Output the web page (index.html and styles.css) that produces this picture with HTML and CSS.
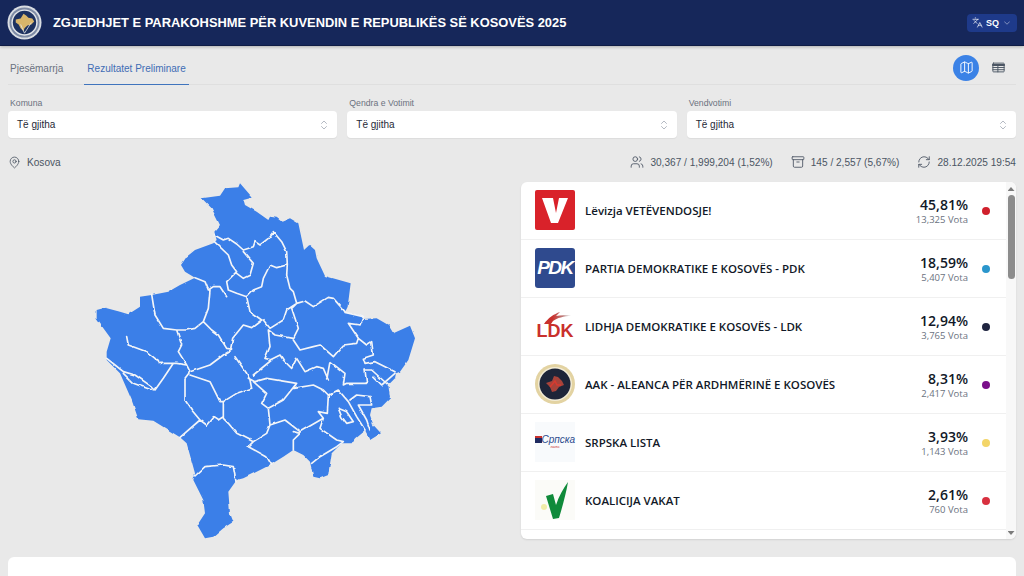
FILE: index.html
```html
<!DOCTYPE html>
<html lang="sq">
<head>
<meta charset="utf-8">
<title>Zgjedhjet</title>
<link rel="stylesheet" href="styles.css">
</head>
<body>
<header class="topbar">
  <div class="brand">
    <svg class="emblem" viewBox="0 0 36 36"><circle cx="18" cy="18" r="17.500" fill="#d9dde3"/><circle cx="18" cy="18" r="15.500" fill="#7d8aa5"/><circle cx="18" cy="18" r="13.500" fill="#e4e6ea"/><circle cx="18" cy="18" r="12" fill="#1d3160"/><path d="M9 15l5-1 3-5 3 2 2 2 4 1 2 3-3 3-4 1-3 3-1 3-3-3-2-4-3-2z" fill="#d9b56a"/><path d="M18 29l-4-9M18 29l7-11" stroke="#e4e6ea" stroke-width=".8" fill="none"/></svg>
    <h1 class="title">ZGJEDHJET E PARAKOHSHME PËR KUVENDIN E REPUBLIKËS SË KOSOVËS 2025</h1>
  </div>
  <button class="lang">
    <svg class="ic ic-11" viewBox="0 0 24 24"><path d="M5 8l6 6M4 14l6-6 2-3M2 5h12M7 2h1M22 22l-5-10-5 10M14 18h6"/></svg>
    <span>SQ</span>
    <svg class="ic ic-10 dim" viewBox="0 0 24 24"><path d="M6 9l6 6 6-6"/></svg>
  </button>
</header>
<main class="page">
  <nav class="tabs">
    <div class="tablist">
      <a class="tab">Pjesëmarrja</a>
      <a class="tab active">Rezultatet Preliminare</a>
    </div>
    <div class="views">
      <span class="view on"><svg class="ic ic-15" viewBox="0 0 24 24"><path d="M14.106 5.553a2 2 0 0 0 1.788 0l3.659-1.830A1 1 0 0 1 21 4.619v12.764a1 1 0 0 1-.553.894l-4.553 2.277a2 2 0 0 1-1.788 0l-4.212-2.106a2 2 0 0 0-1.788 0l-3.659 1.830A1 1 0 0 1 3 19.381V6.618a1 1 0 0 1 .553-.894l4.553-2.277a2 2 0 0 1 1.788 0zM15 5.764v15M9 3.236v15"/></svg></span>
      <span class="view"><svg class="ic ic-15" viewBox="0 0 24 24"><rect x="3" y="5" width="18" height="14" rx="1"/><path d="M3 8h18" stroke-width="3"/><path d="M3 12h18M3 15.500h18M11 10v9"/></svg></span>
    </div>
  </nav>
  <section class="filters">
    <div class="field"><label class="flabel">Komuna</label><div class="select"><span>Të gjitha</span><svg class="ic ic-12 light" viewBox="0 0 24 24"><path d="M7 15l5 5 5-5M7 9l5-5 5 5"/></svg></div></div>
    <div class="field"><label class="flabel">Qendra e Votimit</label><div class="select"><span>Të gjitha</span><svg class="ic ic-12 light" viewBox="0 0 24 24"><path d="M7 15l5 5 5-5M7 9l5-5 5 5"/></svg></div></div>
    <div class="field"><label class="flabel">Vendvotimi</label><div class="select"><span>Të gjitha</span><svg class="ic ic-12 light" viewBox="0 0 24 24"><path d="M7 15l5 5 5-5M7 9l5-5 5 5"/></svg></div></div>
  </section>
  <section class="status">
    <div class="stat"><svg class="ic ic-13" viewBox="0 0 24 24"><path d="M20 10c0 6-8 12-8 12s-8-6-8-12a8 8 0 0 1 16 0Z"/><circle cx="12" cy="10" r="3"/></svg><span class="place">Kosova</span></div>
    <div class="stats">
      <div class="stat"><svg class="ic ic-14" viewBox="0 0 24 24"><path d="M16 21v-2a4 4 0 0 0-4-4H6a4 4 0 0 0-4 4v2"/><circle cx="9" cy="7" r="4"/><path d="M22 21v-2a4 4 0 0 0-3-3.870M16 3.130a4 4 0 0 1 0 7.750"/></svg><span>30,367 / 1,999,204 (1,52%)</span></div>
      <div class="stat"><svg class="ic ic-14" viewBox="0 0 24 24"><rect x="2" y="3" width="20" height="5" rx="1"/><path d="M4 8v11a2 2 0 0 0 2 2h12a2 2 0 0 0 2-2V8M10 12h4"/></svg><span>145 / 2,557 (5,67%)</span></div>
      <div class="stat"><svg class="ic ic-14" viewBox="0 0 24 24"><path d="M3 12a9 9 0 0 1 9-9 9.750 9.750 0 0 1 6.740 2.740L21 8M21 3v5h-5M21 12a9 9 0 0 1-9 9 9.750 9.750 0 0 1-6.740-2.740L3 16M8 16H3v5"/></svg><span>28.12.2025 19:54</span></div>
    </div>
  </section>
  <section class="content">
    <div class="mapcol">
      <svg class="map" viewBox="0 21 1050 1089">
        <defs>
          <filter id="rough" x="-5%" y="-5%" width="110%" height="110%" primitiveUnits="userSpaceOnUse">
            <feTurbulence type="fractalNoise" baseFrequency="0.035" numOctaves="2" seed="4"/>
            <feDisplacementMap in="SourceGraphic" scale="8" xChannelSelector="R" yChannelSelector="G"/>
          </filter>
        </defs>
        <g class="rough">
        <path class="land" d="M365,70 420,62 435,40 475,37 480,25 515,65 490,72 495,90 530,110 565,135 570,125 590,128 605,140 630,130 655,145 672,225 688,210 705,225 710,250 735,303 812,325 803,395 795,412 845,422 850,432 890,430 925,450 940,475 990,452 1005,490 985,555 960,590 948,595 945,610 925,630 930,670 905,695 875,700 870,720 880,750 903,775 870,795 855,765 825,790 815,805 785,805 755,835 745,900 720,910 700,905 690,860 670,840 640,825 610,845 570,870 530,890 490,910 470,915 445,950 450,1015 460,1040 430,1060 400,1085 375,1090 352,1050 375,1015 370,975 340,915 345,895 320,805 300,787 220,737 175,733 155,675 120,595 80,555 80,530 92,490 50,432 50,405 75,398 120,410 145,418 180,395 180,365 215,360 265,350 300,330 345,308 315,290 303,270 320,245 345,225 400,205 410,195 403,170 420,150 395,100Z"/>
        <path class="lines" d="M403,180 430,195 445,190 470,207 490,225 520,215 525,200 540,210 565,190 580,170 605,200 620,230 622,270 620,300 630,340 640,350 650,385M403,200 445,240 455,270 470,290 440,320 445,345 470,355 500,365 520,345 545,335 550,310 570,270 590,278 620,270M470,295 490,310 510,300 520,265 490,230M345,308 375,320 385,345 400,335 420,335 440,365M215,358 225,420 250,460 290,465 320,465 345,460 370,440 385,400 390,345M370,440 395,465 415,480 440,520 452,522 458,490 490,450 515,458 545,435 510,410 500,365M550,435 570,460 610,435 620,405 650,385 635,400 655,460 640,490 585,480 565,465 570,515 555,550 575,555M650,385 675,378 700,395 745,367 760,370 795,410M795,412 850,425 840,450 805,445 835,490 830,505 790,510 760,545 720,510 700,515 660,525 640,495M140,485 145,510 200,530 225,550 235,565 290,565 320,570M290,465 305,510 295,530 320,570 330,590M455,525 430,540 390,570 330,590M835,490 860,510 875,500 880,540 850,550 855,565 885,560 945,590M80,550 105,570 130,590 165,600 215,635 225,645 250,610 280,565M130,595 160,625 215,645M330,590 315,610 315,675 335,705 360,735 300,787M330,600 390,620 420,680 430,680 430,725 415,735 400,725 380,750 360,735M430,680 470,655 515,640 510,615 500,595 465,545M430,680 430,730 445,745 470,775 510,795 520,800 560,775 570,750 565,700 545,685 560,655 520,620M505,610 525,620 560,610 650,625 610,675 565,700M650,625 640,640 700,630 730,645 745,660 742,715 715,710 730,730 660,770 615,735 570,750M505,815 560,845 575,870M520,800 505,815M640,770 660,775 640,795 640,825M730,730 720,760 770,795 790,800 770,815 720,845 695,865M745,660 775,645 805,680 830,725 855,765M800,625 860,625 855,585 875,585 925,630M880,605 905,630 945,595M740,615 750,560 795,595 790,630 800,625M570,555 600,540 610,555 635,580 650,550 675,590 710,575 730,580 745,615M520,600 575,555M810,675 830,660 870,665 875,690 835,690 860,735 870,765M775,700 800,710 820,740 800,745 785,725ZM345,903 375,875 430,870 460,875 468,920"/>
        </g>
      </svg>
    </div>
    <div class="card">
      <ul class="rows">
        <li class="row">
          <svg class="logo" viewBox="0 0 40 40"><rect width="40" height="40" rx="2" fill="#d9222a"/><path d="M7 8H18L21 23 24 8H33L23 33H16z" fill="#fff"/></svg>
          <span class="name">Lëvizja VETËVENDOSJE!</span>
          <div class="nums"><strong class="pct">45,81%</strong><span class="votes">13,325 Vota</span></div>
          <i class="dot dot-vv"></i>
        </li>
        <li class="row">
          <div class="logo logo-pdk">PDK</div>
          <span class="name">PARTIA DEMOKRATIKE E KOSOVËS - PDK</span>
          <div class="nums"><strong class="pct">18,59%</strong><span class="votes">5,407 Vota</span></div>
          <i class="dot dot-pdk"></i>
        </li>
        <li class="row">
          <div class="logo logo-ldk"><svg class="swoosh" viewBox="0 0 40 12"><defs><linearGradient id="sw"><stop offset=".3" stop-color="#c9302c"/><stop offset="1" stop-color="#b8b8b8"/></linearGradient></defs><path d="M9 12C13 6 19 2 25 0l-4 4c5-1 10-1 15 0-7 0-14 2-18 5l-2 3z" fill="url(#sw)"/></svg><span>LDK</span></div>
          <span class="name">LIDHJA DEMOKRATIKE E KOSOVËS - LDK</span>
          <div class="nums"><strong class="pct">12,94%</strong><span class="votes">3,765 Vota</span></div>
          <i class="dot dot-ldk"></i>
        </li>
        <li class="row">
          <svg class="logo" viewBox="0 0 40 40"><circle cx="20" cy="20" r="20" fill="#e3d3a2"/><circle cx="20" cy="20" r="17" fill="#f3ecd6"/><circle cx="20" cy="20" r="15.500" fill="#1e2538"/><path d="M11 19l6-2 2-5 4 1 4 4 2 4-5 2-3 4-4 1-2-5z" fill="#a8433a"/><path d="M15 23l5-6 2 4h4" stroke="#d93a30" stroke-width="1.500" fill="none"/></svg>
          <span class="name">AAK - ALEANCA PËR ARDHMËRINË E KOSOVËS</span>
          <div class="nums"><strong class="pct">8,31%</strong><span class="votes">2,417 Vota</span></div>
          <i class="dot dot-aak"></i>
        </li>
        <li class="row">
          <div class="logo logo-sl"><i class="flag"></i><span>Српска</span><small>листа</small></div>
          <span class="name">SRPSKA LISTA</span>
          <div class="nums"><strong class="pct">3,93%</strong><span class="votes">1,143 Vota</span></div>
          <i class="dot dot-sl"></i>
        </li>
        <li class="row">
          <svg class="logo" viewBox="0 0 40 40"><rect width="40" height="40" fill="#fbfbf8"/><circle cx="9" cy="27" r="3" fill="#f0eca8"/><path d="M11 16L18 14 21 25C24 16 28 9 33 2 31 14 27 28 24 38L18 39z" fill="#0f8a3a"/></svg>
          <span class="name">KOALICIJA VAKAT</span>
          <div class="nums"><strong class="pct">2,61%</strong><span class="votes">760 Vota</span></div>
          <i class="dot dot-vak"></i>
        </li>
      </ul>
      <div class="scroll">
        <i class="arrow up"></i>
        <div class="track"><div class="thumb"></div></div>
        <i class="arrow down"></i>
      </div>
    </div>
  </section>
  <section class="lower"></section>
</main>
</body>
</html>
```
FILE: styles.css
```css
* { box-sizing: border-box; }
html, body { margin: 0; height: 576px; overflow: hidden; }
body { background: #e9e9e9; font-family: "Liberation Sans", Arial, sans-serif; color: #4b5563; }

.ic { fill: none; stroke: currentColor; stroke-width: 1.5; stroke-linecap: round; stroke-linejoin: round; flex: none; display: block; }
.ic-10 { width: 10px; height: 10px; }
.ic-11 { width: 11px; height: 11px; }
.ic-12 { width: 12px; height: 12px; }
.ic-13 { width: 13px; height: 13px; }
.ic-14 { width: 14px; height: 14px; }
.ic-15 { width: 15px; height: 15px; }
.dim { opacity: .7; }
.light { color: #9ca3af; }

.topbar { height: 46px; background: #16275a; border-bottom: 1px solid #0f1c45; box-shadow: 0 1px 3px rgba(0,0,0,.25); display: flex; align-items: center; justify-content: space-between; padding: 0 7px; }
.brand { display: flex; align-items: center; gap: 11px; }
.emblem { width: 35px; height: 35px; display: block; }
.title { margin: 0; font-size: 12.900px; font-weight: 700; color: #fff; white-space: nowrap; }
.lang { width: 50px; height: 18px; background: #1e3a8a; border: 0; border-radius: 4px; color: #fff; display: flex; align-items: center; justify-content: center; gap: 3px; padding: 0; font: 700 9px "Liberation Sans", Arial, sans-serif; }

.page { padding: 0 8px; }
.tabs { height: 39px; display: flex; align-items: stretch; justify-content: space-between; border-bottom: 1px solid #dfdfdf; }
.tablist { display: flex; }
.tab { font-size: 10px; color: #6b7280; padding: 6px 2px 0; display: flex; align-items: center; margin-bottom: -1px; }
.tab.active { color: #3f6db5; border-bottom: 1.500px solid #3f74bd; margin-left: 19px; padding: 6px 3px 0; }
.views { display: flex; align-items: center; gap: 6px; padding: 5px 5px 0 0; }
.view { width: 26px; height: 26px; border-radius: 50%; display: flex; align-items: center; justify-content: center; color: #4b5563; }
.view.on { background: #3b82e6; color: #fff; }

.filters { display: grid; grid-template-columns: repeat(3, 1fr); gap: 10px; margin-top: 12px; }
.flabel { display: block; font-size: 8.700px; line-height: 12px; color: #6b7280; margin: 0 0 2px 2px; }
.select { height: 27px; background: #fff; border-radius: 4px; box-shadow: 0 1px 1px rgba(0,0,0,.06); display: flex; align-items: center; justify-content: space-between; padding: 0 7px 0 9px; font-size: 10px; color: #1f2937; }

.status { display: flex; justify-content: space-between; align-items: center; height: 16px; margin-top: 16px; font-size: 10.100px; color: #4b5563; padding-right: 0; }
.stats { display: flex; gap: 18px; }
.stat { display: flex; align-items: center; gap: 6px; }
.place { margin-left: 0; }

.content { display: grid; grid-template-columns: 513px 495px; margin-top: 12px; }
.mapcol { height: 357px; }
.map { display: block; width: 350px; height: 363px; margin-left: 72px; }
.rough { filter: url(#rough); }
.land { fill: #3b7fe8; }
.lines { fill: none; stroke: #f3f5f8; stroke-width: 5; stroke-linejoin: round; stroke-linecap: round; }

.card { height: 357px; background: #fff; border-radius: 6px; box-shadow: 0 1px 2px rgba(0,0,0,.1); display: flex; overflow: hidden; }
.rows { list-style: none; margin: 0; padding: 0; flex: 1; min-width: 0; }
.row { height: 58px; display: flex; align-items: center; padding: 0 16px 0 14px; border-bottom: 1px solid #f0f0f0; font-family: "Open Sans", sans-serif; }
.logo { width: 40px; height: 40px; flex: none; display: block; margin-top: -1px; }
.name { margin-left: 10px; flex: 1; font-size: 11.500px; font-weight: 600; color: #111827; white-space: nowrap; }
.nums { display: flex; flex-direction: column; align-items: flex-end; }
.pct { font-size: 14px; line-height: 17px; font-weight: 600; color: #111827; }
.votes { font-size: 9.500px; line-height: 13px; color: #6b7280; }
.dot { width: 8px; height: 8px; border-radius: 50%; margin-left: 14px; flex: none; }
.dot-vv { background: #d0202c; }
.dot-pdk { background: #2b96cc; }
.dot-ldk { background: #1f2540; }
.dot-aak { background: #7a0f8a; }
.dot-sl { background: #f3d568; }
.dot-vak { background: #d8303f; }

.logo-pdk { background: #2f4a8e; border-radius: 3px; color: #fff; font: italic 700 19px/40px "Liberation Sans", Arial, sans-serif; text-align: center; letter-spacing: -1.500px; }
.logo-ldk { font: 700 18px/1 "Liberation Sans", Arial, sans-serif; color: #c9302c; display: flex; flex-direction: column; align-items: center; justify-content: flex-end; padding-bottom: 6px; }
.swoosh { width: 40px; height: 12px; display: block; margin-bottom: -2px; }
.logo-sl { background: #f8fafc; position: relative; display: flex; flex-direction: column; align-items: flex-end; justify-content: center; font: italic 400 10px/1 "Liberation Sans", Arial, sans-serif; color: #2b4a8c; }
.logo-sl small { font-size: 3px; color: #c9302c; align-self: center; margin-top: 1px; }
.flag { position: absolute; left: 0; top: 14px; width: 7px; height: 7px; background: linear-gradient(#c9302c 30%, #1f2a60 30%); }

.scroll { width: 10px; flex: none; background: #f8f8f8; display: flex; flex-direction: column; align-items: center; }
.arrow { width: 7px; height: 4px; flex: none; background: #7c7c7c; }
.arrow.up { clip-path: polygon(50% 0, 100% 100%, 0 100%); margin-top: 5px; }
.arrow.down { clip-path: polygon(0 0, 100% 0, 50% 100%); margin-bottom: 4px; }
.track { flex: 1; width: 100%; padding: 4px 1.500px; }
.thumb { height: 84px; background: #8c8c8c; border-radius: 4px; }

.lower { height: 19px; background: #fff; border-radius: 6px 6px 0 0; margin-top: 18px; }
```
